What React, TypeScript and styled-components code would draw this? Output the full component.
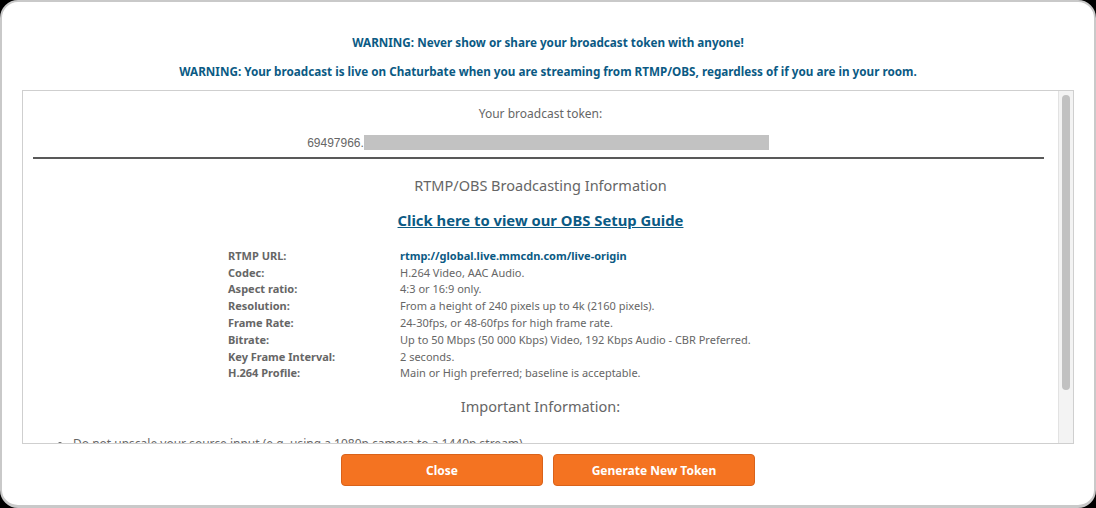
import styled, { createGlobalStyle } from "styled-components";

const GlobalStyle = createGlobalStyle`
    html, body {
        margin: 0;
        padding: 0;
        background: #000;
    }
    body {
        font-family: "Noto Sans", "DejaVu Sans", sans-serif;
    }
`;

const specs = [
    { label: "RTMP URL:", value: "rtmp://global.live.mmcdn.com/live-origin", link: true },
    { label: "Codec:", value: "H.264 Video, AAC Audio." },
    { label: "Aspect ratio:", value: "4:3 or 16:9 only." },
    { label: "Resolution:", value: "From a height of 240 pixels up to 4k (2160 pixels)." },
    { label: "Frame Rate:", value: "24-30fps, or 48-60fps for high frame rate." },
    { label: "Bitrate:", value: "Up to 50 Mbps (50 000 Kbps) Video, 192 Kbps Audio - CBR Preferred." },
    { label: "Key Frame Interval:", value: "2 seconds." },
    { label: "H.264 Profile:", value: "Main or High preferred; baseline is acceptable." },
];

export default function App() {
    return (
        <>
            <GlobalStyle />
            <Dialog>
                <Warning>WARNING: Never show or share your broadcast token with anyone!</Warning>
                <Warning>WARNING: Your broadcast is live on Chaturbate when you are streaming from RTMP/OBS, regardless of if you are in your room.</Warning>
                <ScrollBox>
                    <ScrollContent>
                        <TokenLabel>Your broadcast token:</TokenLabel>
                        <TokenLine>
                            69497966.<TokenMask />
                        </TokenLine>
                        <Rule />
                        <SectionTitle>RTMP/OBS Broadcasting Information</SectionTitle>
                        <GuideLink href="#">Click here to view our OBS Setup Guide</GuideLink>
                        <SpecTable>
                            <tbody>
                                {specs.map(s => (
                                    <tr key={s.label}>
                                        <SpecLabel>{s.label}</SpecLabel>
                                        <SpecValue $link={s.link}>{s.value}</SpecValue>
                                    </tr>
                                ))}
                            </tbody>
                        </SpecTable>
                        <SectionTitle $gap={15}>Important Information:</SectionTitle>
                        <NoteList>
                            <li>Do not upscale your source input (e.g. using a 1080p camera to a 1440p stream).</li>
                        </NoteList>
                    </ScrollContent>
                    <ScrollTrack>
                        <ScrollThumb />
                    </ScrollTrack>
                </ScrollBox>
                <Actions>
                    <OrangeButton>Close</OrangeButton>
                    <OrangeButton>Generate New Token</OrangeButton>
                </Actions>
            </Dialog>
        </>
    );
}

const Dialog = styled.div`
    box-sizing: border-box;
    width: 1096px;
    height: 508px;
    background: #fff;
    border: 2px solid #c9c9c9;
    border-bottom-width: 3px;
    border-radius: 18px;
    padding: 32px 20px 0;
    display: flex;
    flex-direction: column;
`;

const Warning = styled.div`
    color: #0b5a84;
    font-size: 11.7px;
    font-weight: bold;
    text-align: center;
    line-height: 16px;
    margin-bottom: 13px;
    &:nth-of-type(2) { margin-bottom: 11px; }
`;

const ScrollBox = styled.div`
    box-sizing: border-box;
    height: 354px;
    border: 1px solid #cfcfcf;
    display: flex;
    color: #666;
`;

const ScrollContent = styled.div`
    flex: 1;
    min-width: 0;
    overflow: hidden;
`;

const ScrollTrack = styled.div`
    width: 14px;
    flex-shrink: 0;
    background: #f3f3f3;
    border-left: 1px solid #e2e2e2;
    padding-top: 4px;
`;

const ScrollThumb = styled.div`
    width: 8px;
    height: 295px;
    margin: 0 auto;
    background: #c1c1c1;
    border-radius: 4px;
`;

const TokenLabel = styled.div`
    text-align: center;
    font-size: 12px;
    line-height: 16px;
    margin-top: 15px;
`;

const TokenLine = styled.div`
    text-align: center;
    padding-right: 5px;
    font-family: "Liberation Sans", Arial, sans-serif;
    font-size: 12px;
    line-height: 16px;
    margin-top: 13px;
`;

const TokenMask = styled.span`
    display: inline-block;
    vertical-align: -3px;
    width: 405px;
    height: 15px;
    background: #c2c2c2;
    filter: blur(0.5px);
`;

const Rule = styled.hr`
    margin: 6px 14px 0 10px;
    border: 0;
    border-top: 2px solid #595959;
`;

const SectionTitle = styled.div<{ $gap?: number }>`
    text-align: center;
    font-size: 14.5px;
    line-height: 20px;
    margin-top: ${p => p.$gap ?? 16}px;
`;

const GuideLink = styled.a`
    display: block;
    width: max-content;
    margin: 15px auto 0;
    color: #0b5a84;
    font-size: 14.8px;
    font-weight: bold;
    line-height: 20px;
    text-decoration: underline;
`;

const SpecTable = styled.table`
    border-collapse: collapse;
    margin: 17px auto 0 205px;
    font-size: 11px;
`;

const SpecLabel = styled.td`
    width: 172px;
    padding: 0;
    height: 16.8px;
    font-weight: bold;
    color: #666;
`;

const SpecValue = styled.td<{ $link?: boolean }>`
    padding: 0;
    color: ${p => p.$link ? "#0b5a84" : "#666"};
    font-weight: ${p => p.$link ? "bold" : "normal"};
`;

const NoteList = styled.ul`
    margin: 19px 0 0;
    padding-left: 50px;
    font-size: 12px;
    line-height: 18px;
`;

const Actions = styled.div`
    display: flex;
    justify-content: center;
    gap: 10px;
    margin-top: 10px;
`;

const OrangeButton = styled.button`
    width: 202px;
    height: 32px;
    background: #f47321;
    border: 1px solid #d9621a;
    border-radius: 4px;
    color: #fff;
    font-family: inherit;
    font-size: 12px;
    font-weight: bold;
    cursor: pointer;
`;
